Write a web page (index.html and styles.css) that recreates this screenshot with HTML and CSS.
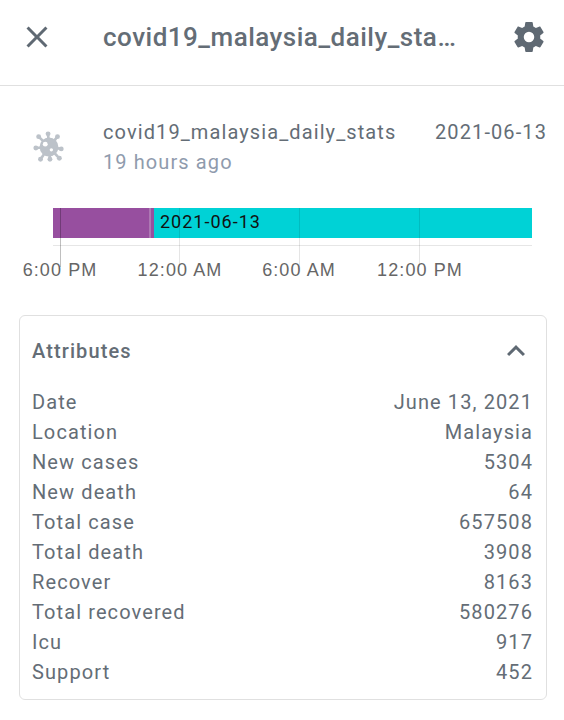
FILE: index.html
```html
<!DOCTYPE html>
<html>
<head>
	<title>covid19_malaysia_daily_stats</title>
	<link rel="stylesheet" href="styles.css">
</head>
<body>
	<header class="top-bar">
		<svg class="top-icon" viewBox="0 0 24 24"><path d="M19,6.41L17.59,5L12,10.59L6.41,5L5,6.41L10.59,12L5,17.59L6.41,19L12,13.41L17.59,19L19,17.59L13.41,12L19,6.41Z"/></svg>
		<div class="top-title">covid19_malaysia_daily_stats</div>
		<svg class="top-icon" viewBox="0 0 24 24"><path d="M12,15.5A3.5,3.5 0 0,1 8.5,12A3.5,3.5 0 0,1 12,8.5A3.5,3.5 0 0,1 15.5,12A3.5,3.5 0 0,1 12,15.5M19.43,12.97C19.47,12.65 19.5,12.33 19.5,12C19.5,11.67 19.47,11.34 19.43,11L21.54,9.37C21.73,9.22 21.78,8.95 21.66,8.73L19.66,5.27C19.54,5.05 19.27,4.96 19.05,5.05L16.56,6.05C16.04,5.66 15.5,5.32 14.87,5.07L14.5,2.42C14.46,2.18 14.25,2 14,2H10C9.75,2 9.54,2.18 9.5,2.42L9.13,5.07C8.5,5.32 7.96,5.66 7.44,6.05L4.95,5.05C4.73,4.96 4.46,5.05 4.34,5.27L2.34,8.73C2.21,8.95 2.27,9.22 2.46,9.37L4.57,11C4.53,11.34 4.5,11.67 4.5,12C4.5,12.33 4.53,12.65 4.57,12.97L2.46,14.63C2.27,14.78 2.21,15.05 2.34,15.27L4.34,18.73C4.46,18.95 4.73,19.03 4.95,18.95L7.44,17.94C7.96,18.34 8.5,18.68 9.13,18.93L9.5,21.58C9.54,21.82 9.75,22 10,22H14C14.25,22 14.46,21.82 14.5,21.58L14.87,18.93C15.5,18.67 16.04,18.34 16.56,17.94L19.05,18.95C19.27,19.03 19.54,18.95 19.66,18.73L21.66,15.27C21.78,15.05 21.73,14.78 21.54,14.63L19.43,12.97Z"/></svg>
	</header>

	<section class="entity">
		<svg class="entity-icon" viewBox="0 0 34 34">
			<g class="virus-arms">
				<line x1="17" y1="17" x2="16" y2="3"/>
				<line x1="17" y1="17" x2="26" y2="6"/>
				<line x1="17" y1="17" x2="30" y2="19"/>
				<line x1="17" y1="17" x2="28" y2="29"/>
				<line x1="17" y1="17" x2="18" y2="30"/>
				<line x1="17" y1="17" x2="8" y2="30"/>
				<line x1="17" y1="17" x2="3" y2="18"/>
				<line x1="17" y1="17" x2="6" y2="6"/>
			</g>
			<circle class="virus-tip" cx="16" cy="3" r="2.6"/>
			<circle class="virus-tip" cx="26" cy="6" r="2.6"/>
			<circle class="virus-tip" cx="30" cy="19" r="2.6"/>
			<circle class="virus-tip" cx="28" cy="29" r="2.6"/>
			<circle class="virus-tip" cx="18" cy="30" r="2.6"/>
			<circle class="virus-tip" cx="8" cy="30" r="2.6"/>
			<circle class="virus-tip" cx="3" cy="18" r="2.6"/>
			<circle class="virus-tip" cx="6" cy="6" r="2.6"/>
			<circle class="virus-tip" cx="17" cy="17" r="10"/>
			<circle class="virus-hole" cx="13" cy="14" r="2.6"/>
			<circle class="virus-hole" cx="19.5" cy="20" r="1.8"/>
		</svg>
		<div class="entity-info">
			<div class="entity-name">covid19_malaysia_daily_stats</div>
			<div class="entity-ago">19 hours ago</div>
		</div>
		<div class="entity-state">2021-06-13</div>
	</section>

	<section class="timeline">
		<div class="grid-line first" style="left: 60px"></div>
		<div class="grid-line" style="left: 179px"></div>
		<div class="grid-line" style="left: 299px"></div>
		<div class="grid-line" style="left: 419px"></div>
		<div class="bar">
			<div class="bar-old"></div>
			<div class="bar-now">2021-06-13</div>
		</div>
		<div class="axis"></div>
		<div class="tick-labels">
			<span class="tick" style="left: 60px">6:00 PM</span>
			<span class="tick" style="left: 180px">12:00 AM</span>
			<span class="tick" style="left: 299px">6:00 AM</span>
			<span class="tick" style="left: 420px">12:00 PM</span>
		</div>
	</section>

	<section class="card">
		<div class="card-head">
			<span>Attributes</span>
			<svg class="chevron" viewBox="0 0 24 24"><path d="M7.41,15.41L12,10.83L16.59,15.41L18,14L12,8L6,14L7.41,15.41Z"/></svg>
		</div>
		<div class="attr"><span>Date</span><span>June 13, 2021</span></div>
		<div class="attr"><span>Location</span><span>Malaysia</span></div>
		<div class="attr"><span>New cases</span><span>5304</span></div>
		<div class="attr"><span>New death</span><span>64</span></div>
		<div class="attr"><span>Total case</span><span>657508</span></div>
		<div class="attr"><span>Total death</span><span>3908</span></div>
		<div class="attr"><span>Recover</span><span>8163</span></div>
		<div class="attr"><span>Total recovered</span><span>580276</span></div>
		<div class="attr"><span>Icu</span><span>917</span></div>
		<div class="attr"><span>Support</span><span>452</span></div>
	</section>
</body>
</html>
```

FILE: styles.css
```css
body {
	overflow: hidden;
	margin: 0;
	color: #646d76;
	font-family: Roboto, sans-serif;
	font-size: 20px;
	letter-spacing: 1.1px;
	background: #fff;
}

.top-bar {
	display: flex;
	align-items: center;
	height: 86px;
	padding: 0 17px 11px 19px;
	box-sizing: border-box;
	border-bottom: 1px solid #e0e0e0;
}

.top-icon {
	flex: none;
	width: 36px;
	height: 36px;
	fill: #5f6973;
}

.top-title {
	flex: 1;
	min-width: 0;
	margin: 0 55px 0 48px;
	overflow: hidden;
	font-size: 26px;
	font-weight: 500;
	letter-spacing: 0.5px;
	text-overflow: ellipsis;
	white-space: nowrap;
}

.entity {
	display: flex;
	align-items: flex-start;
	height: 60px;
	margin-top: 31px;
	padding: 0 17px 0 33px;
	line-height: 30px;
}

.entity-icon {
	flex: none;
	width: 32px;
	height: 32px;
	margin-top: 14px;
}

.virus-arms line {
	stroke: #bcc2c9;
	stroke-width: 2.8;
}

.virus-tip {
	fill: #bcc2c9;
}

.virus-hole {
	fill: #fff;
}

.entity-info {
	flex: 1;
	margin-left: 38px;
}

.entity-ago {
	color: #8f9bad;
}

.timeline {
	position: relative;
	height: 107px;
	margin-top: 31px;
}

.grid-line {
	position: absolute;
	top: 0;
	width: 1px;
	height: 59px;
	background: rgba(0, 0, 0, 0.1);
}

.grid-line.first {
	background: rgba(0, 0, 0, 0.25);
}

.bar {
	display: flex;
	height: 30px;
	margin: 7px 32px 0 53px;
}

.bar-old {
	width: 101px;
	background: linear-gradient(to right, #974f9f 96px, #ad78b3 96px, #ad78b3 98px, #974f9f 98px);
}

.bar-now {
	flex: 1;
	padding-left: 6px;
	color: #111;
	font-size: 18px;
	letter-spacing: 1px;
	line-height: 28px;
	background: #00d2d6;
}

.axis {
	height: 1px;
	margin: 7px 32px 0 53px;
	background: #e6e6e6;
}

.tick-labels {
	position: relative;
	margin-top: 15px;
}

.tick {
	position: absolute;
	top: -1px;
	color: #666;
	font-family: "Liberation Sans", sans-serif;
	font-size: 18px;
	letter-spacing: 1.1px;
	line-height: 20px;
	transform: translateX(-50%);
	white-space: nowrap;
}

.card {
	height: 385px;
	margin: 0 17px 0 19px;
	padding: 0 13px 0 12px;
	box-sizing: border-box;
	border: 1px solid #e0e0e0;
	border-radius: 6px;
}

.card-head {
	display: flex;
	align-items: center;
	justify-content: space-between;
	height: 69px;
	margin-bottom: 2px;
	font-weight: 500;
}

.chevron {
	width: 36px;
	height: 36px;
	margin-right: -1px;
	fill: #5f6973;
}

.attr {
	display: flex;
	justify-content: space-between;
	line-height: 30px;
}
```
